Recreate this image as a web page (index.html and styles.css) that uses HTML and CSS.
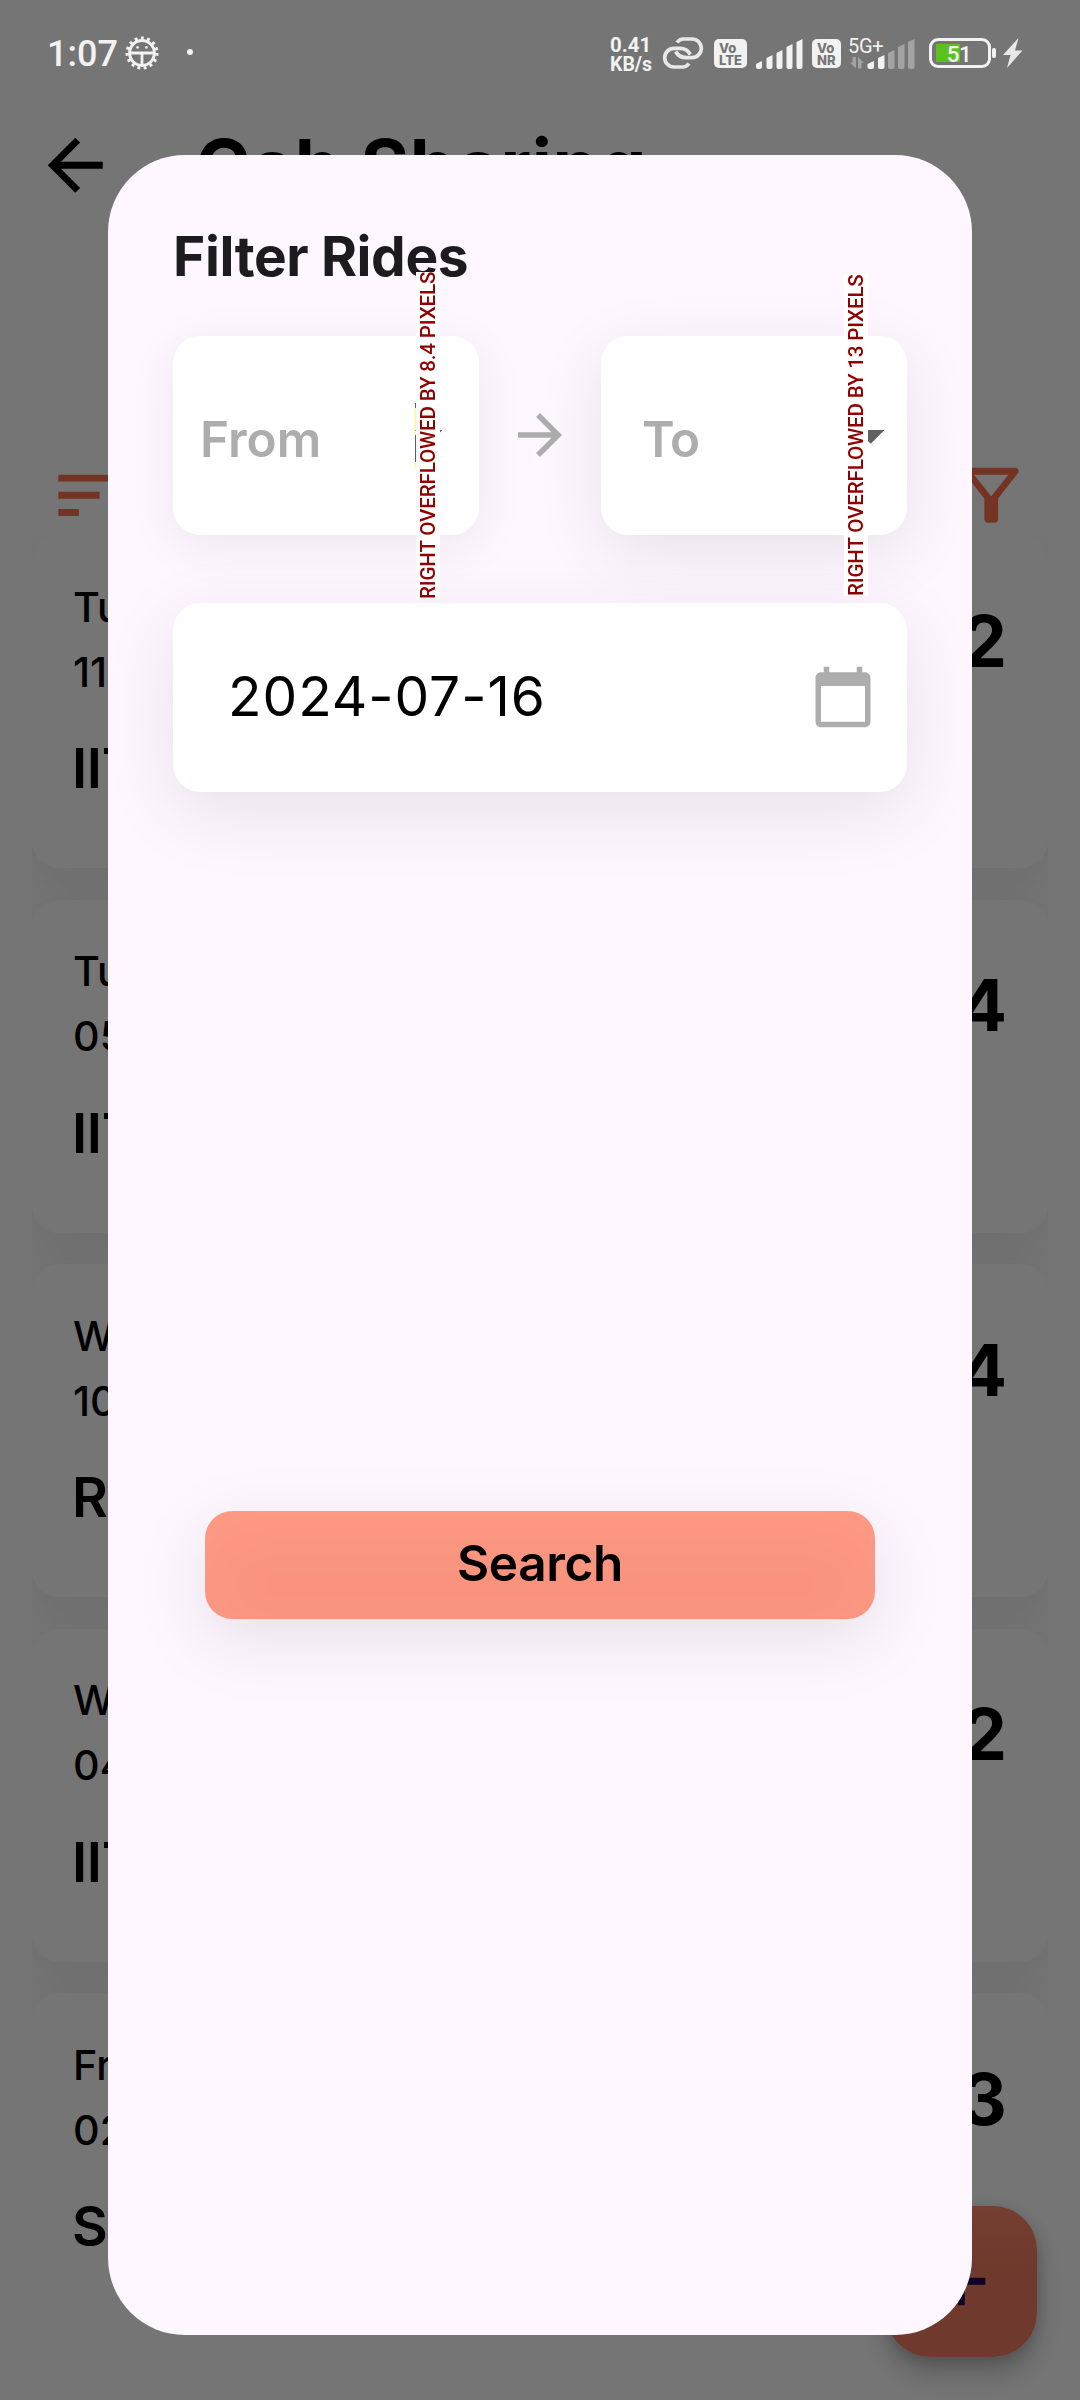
FILE: index.html
```html
<!DOCTYPE html>
<html lang="en">
<head>
<meta charset="utf-8">
<title>Cab Sharing</title>
<link rel="stylesheet" href="styles.css">
</head>
<body>
<div class="screen">
  <div class="page">
    <header class="appbar">
      <svg class="icon-lg" viewBox="0 0 24 24"><path d="M20 11H7.83l5.59-5.59L12 4l-8 8 8 8 1.41-1.41L7.83 13H20z"/></svg>
      <h1 class="appbar-title">Cab Sharing</h1>
    </header>
    <div class="tools">
      <svg class="icon-lg" viewBox="0 0 24 24"><path d="M3 18h6v-2H3v2zM3 6v2h18V6H3zm0 7h12v-2H3v2z"/></svg>
      <svg class="icon-lg" viewBox="0 0 24 24"><path d="M7 6h10l-5.01 6.3L7 6zm-2.75-.39C6.27 8.2 10 13 10 13v6c0 .55.45 1 1 1h2c.55 0 1-.45 1-1v-6s3.72-4.8 5.74-7.39c.51-.66.04-1.61-.79-1.61H5.04c-.83 0-1.3.95-.79 1.61z"/></svg>
    </div>
    <main class="rides">
      <article class="ride"><div><p class="when">Tu</p><p class="when">11</p><p class="place">IIT</p></div><b class="seats">2</b></article>
      <article class="ride"><div><p class="when">Tu</p><p class="when">05</p><p class="place">IIT</p></div><b class="seats">4</b></article>
      <article class="ride"><div><p class="when">W</p><p class="when">10</p><p class="place">R</p></div><b class="seats">4</b></article>
      <article class="ride"><div><p class="when">W</p><p class="when">04</p><p class="place">IIT</p></div><b class="seats">2</b></article>
      <article class="ride"><div><p class="when">Fr</p><p class="when">02</p><p class="place">S</p></div><b class="seats">3</b></article>
    </main>
    <div class="fab">
      <svg class="icon-lg" viewBox="0 0 24 24"><path d="M19 13h-6v6h-2v-6H5v-2h6V5h2v6h6v2z"/></svg>
    </div>
  </div>

  <div class="scrim"></div>

  <div class="statusbar">
    <span class="clock">1:07</span>
    <svg class="st-gear" width="34" height="34" viewBox="0 0 34 34">
      <circle cx="17" cy="17" r="12.4" fill="none" stroke="#f2f2f2" stroke-width="3"/>
      <circle cx="17" cy="17" r="15" fill="none" stroke="#f2f2f2" stroke-width="3" stroke-dasharray="2.9 3.38"/>
      <path d="M5 15.4h24v3H18.4V30h-2.8V18.4H5z" fill="#f2f2f2"/>
      <circle cx="12.6" cy="11.4" r="1.3" fill="#f2f2f2"/><circle cx="21.4" cy="11.4" r="1.3" fill="#f2f2f2"/>
    </svg>
    <i class="st-dot"></i>
    <span class="speed"><span>0.41</span><span>KB/s</span></span>
    <svg class="st-link" width="42" height="34" viewBox="0 0 42 34" fill="none" stroke="#e8e8e8" stroke-width="3.7">
      <path d="M15 6.500Q17.500 3 21.500 3H30A9.300 9.300 0 0 1 30 21.600H24Q17 21.600 13.700 15.500"/>
      <path d="M27 27.500Q24.500 31 20.500 31H12A9.300 9.300 0 0 1 12 12.400H18Q25 12.400 28.300 18.500"/>
    </svg>
    <span class="badge badge-lte">Vo<br>LTE</span>
    <svg class="st-sig" width="47" height="32" viewBox="0 0 47 32" fill="#f2f2f2">
      <path d="M0 26l6-3v6q0 2-2 2H2q-2 0-2-2zM10.500 20l6-3v12q0 2-2 2h-2q-2 0-2-2zM20.500 15l6-3v17q0 2-2 2h-2q-2 0-2-2zM30.500 9l6-3v23q0 2-2 2h-2q-2 0-2-2zM40.500 4l6-3v28q0 2-2 2h-2q-2 0-2-2z"/>
    </svg>
    <span class="badge badge-nr">Vo<br>NR</span>
    <span class="net">
      <span class="net-label">5G+</span>
      <svg width="68" height="32" viewBox="0 0 68 32">
        <path d="M19.500 26l6.500-3v6q0 2-2 2h-2.500q-2 0-2-2zM30 20l6.500-3v12q0 2-2 2H32q-2 0-2-2z" fill="#f2f2f2"/>
        <path d="M40 15l6.500-3v17q0 2-2 2H42q-2 0-2-2zM50 9l6.500-3v23q0 2-2 2H52q-2 0-2-2zM60 4l6.500-3v28q0 2-2 2H62q-2 0-2-2z" fill="#a3a3a3"/>
        <path d="M4.500 19H8v11.500L2 24.500h2.500zM10 30.500V19l6 6h-2.500v5.500z" fill="#a3a3a3"/>
      </svg>
    </span>
    <span class="battery"><span class="battery-text">51</span></span>
    <svg class="st-bolt" width="20" height="30" viewBox="0 0 20 30"><path d="M15.500 0L0 17h7.500L4 30 19.500 12.500H12z" fill="#e8e8e8"/></svg>
  </div>

  <section class="dialog">
    <h2 class="dialog-title">Filter Rides</h2>
    <div class="route">
      <div class="field field-from">
        <span>From</span>
        <i class="caret"></i>
        <svg class="drop" viewBox="0 0 10 5"><path d="M0 0h10L5 5z"/></svg>
        <span class="overflow">RIGHT OVERFLOWED BY 8.4 PIXELS</span>
      </div>
      <svg class="icon" viewBox="0 0 24 24"><path d="M12 4l-1.410 1.410L16.170 11H4v2h12.170l-5.580 5.590L12 20l8-8z"/></svg>
      <div class="field field-to">
        <span>To</span>
        <svg class="drop" viewBox="0 0 10 5"><path d="M0 0h10L5 5z"/></svg>
        <span class="overflow">RIGHT OVERFLOWED BY 13 PIXELS</span>
      </div>
    </div>
    <div class="date">
      <span>2024-07-16</span>
      <svg class="icon" viewBox="0 0 24 24"><path d="M20 3h-1V1h-2v2H7V1H5v2H4c-1.100 0-2 .9-2 2v16c0 1.100.9 2 2 2h16c1.100 0 2-.9 2-2V5c0-1.100-.9-2-2-2zm0 18H4V8h16v13z"/></svg>
    </div>
    <div class="search">Search</div>
  </section>
</div>
</body>
</html>
```
FILE: styles.css
```css
* { box-sizing: border-box; margin: 0; padding: 0; }
body { width: 1080px; height: 2400px; overflow: hidden; background: #fff; font-family: Inter, sans-serif; color: #000; }
svg { display: block; flex: none; }
.screen { position: relative; width: 1080px; height: 2400px; overflow: hidden; }
.page { height: 2400px; display: flex; flex-direction: column; }
.icon-lg { width: 82.5px; height: 82.5px; }
.icon { width: 66px; height: 66px; fill: #adadad; }

/* Ride list behind the dialog */
.appbar { display: flex; padding: 124px 0 0 34px; height: 454px; }
.appbar-title { margin: -3px 0 0 79px; font-size: 74.25px; line-height: 90px; font-weight: 700; letter-spacing: .65px; white-space: nowrap; }
.tools { display: flex; justify-content: space-between; height: 81px; padding: 0 48px 0 48px; fill: #ff7050; }
.rides { display: flex; flex-direction: column; gap: 31.5px; height: 1727px; margin: 0 32px; overflow: hidden; }
.ride { flex: none; display: flex; justify-content: space-between; height: 333px; padding: 39.5px 41px 0 41px; border-radius: 27.5px; background: #fff; box-shadow: 0 20px 60px rgba(0,0,0,.08); }
.when { font-size: 41.25px; line-height: 65px; font-weight: 500; }
.place { margin-top: 30.5px; font-size: 55px; line-height: 66px; font-weight: 600; letter-spacing: -.4px; text-indent: -1px; }
.seats { margin-top: 24px; font-size: 71.5px; line-height: 84px; font-weight: 700; }
.fab { position: absolute; left: 886px; top: 2205.500px; width: 151px; height: 151px; border-radius: 44px; display: flex; align-items: center; justify-content: center; background: linear-gradient(#fd8a6c, #f27e62 40%); box-shadow: 0 16px 28px rgba(0,0,0,.22), 0 3px 14px rgba(0,0,0,.16); fill: #21005d; }
.scrim { position: absolute; inset: 0; background: rgba(0,0,0,.54); }

/* Status bar */
.statusbar { position: absolute; left: 0; top: 0; width: 1080px; height: 104px; padding: 0 57px 0 47px; display: flex; align-items: flex-start; color: #f2f2f2; font-family: Roboto, sans-serif; }
.clock { width: 78px; margin-top: 33px; font-size: 36px; line-height: 43px; font-weight: 500; white-space: nowrap; }
.st-gear { margin-top: 36px; }
.st-dot { width: 6px; height: 6px; margin: 49px 0 0 28px; border-radius: 50%; background: #f2f2f2; }
.speed { display: flex; flex-direction: column; gap: 3px; width: 52px; margin: 38px 0 0 417px; font-size: 19.5px; line-height: 16px; font-weight: 700; white-space: nowrap; }
.speed span:first-child { font-size: 20.5px; line-height: 15px; }
.speed span:last-child { line-height: 18px; }
.st-link { margin-top: 36px; }
.badge { height: 29px; margin-top: 39px; padding-top: 3px; border-radius: 5px; background: #f2f2f2; color: #757575; font: 800 13px/12px Inter, sans-serif; text-align: left; white-space: nowrap; }
.badge-lte { width: 33px; margin-left: 10px; padding-left: 5px; }
.st-sig { margin: 37.500px 0 0 9px; }
.badge-nr { width: 29px; margin-left: 9px; padding-left: 5px; }
.net { position: relative; margin: 37.500px 0 0 7px; }
.net-label { position: absolute; left: 0; top: -3px; font-size: 20px; line-height: 22px; letter-spacing: -.3px; }
.battery { position: relative; width: 62px; height: 30px; margin: 38px 12px 0 13px; border: 3px solid #f2f2f2; border-radius: 9px; display: flex; justify-content: center; align-items: center; background: linear-gradient(#5bc11e, #5bc11e) 4px 3px / 24px 18px no-repeat; }
.battery::after { content: ""; position: absolute; right: -8px; top: 7px; width: 4px; height: 10px; border-radius: 2px; background: #f2f2f2; }
.battery-text { margin: 2px 2px 0 0; font-size: 22.5px; line-height: 24px; font-weight: 500; letter-spacing: -.5px; }
.st-bolt { margin-top: 38px; }

/* Filter dialog */
.dialog { position: absolute; left: 108px; top: 155px; width: 864px; height: 2180px; padding: 68px 65px 0; border-radius: 77px; background: #fef7ff; isolation: isolate; }
.dialog-title { font-size: 55px; line-height: 66px; font-weight: 700; letter-spacing: -.4px; color: #1d1b20; white-space: nowrap; }
.route { display: flex; justify-content: space-between; align-items: center; margin-top: 47px; }
.route .icon { position: relative; left: -.5px; top: -.5px; }
.field { position: relative; width: 306px; height: 199px; padding-top: 7px; display: flex; align-items: center; border-radius: 27.5px; background: #fff; font-size: 49.5px; font-weight: 600; color: #adadad; }
.field-from { padding-left: 27px; box-shadow: 0 11px 50px rgba(0,0,0,.07); }
.field-to { padding-left: 41px; box-shadow: 0 18px 70px rgba(0,0,0,.09); }
.field-to > span:first-child { letter-spacing: -.8px; }
.drop { position: absolute; top: 94px; width: 27.5px; height: 13.75px; fill: #616161; }
.field-from .drop { left: 241.500px; }
.field-to .drop { left: 255.500px; }
.caret { position: absolute; left: 242px; top: 67px; width: 1px; height: 65px; background: linear-gradient(#616161 5px, #ffff66 5px 32px, #616161 32px 59px, #ffff66 59px); }
.overflow { position: absolute; writing-mode: vertical-rl; transform: rotate(180deg); width: 24px; background: #fff; color: #900000; font: 500 20.6px/24px Roboto, sans-serif; letter-spacing: -.17px; white-space: nowrap; }
.field-from .overflow { left: 243px; top: -64px; height: 327px; }
.field-to .overflow { left: 243px; top: -61px; height: 321px; }
.date { display: flex; justify-content: space-between; align-items: center; height: 189px; margin-top: 68px; padding: 0 31.5px 0 55px; border-radius: 27.5px; background: #fff; box-shadow: 0 20px 74px rgba(0,0,0,.095); font-size: 55px; letter-spacing: .95px; }
.date span { margin-top: -3px; }
.date .icon { margin-top: -1px; }
.search { position: relative; display: flex; justify-content: center; align-items: center; height: 108px; margin: 719px 32px 0; padding-bottom: 4px; border-radius: 27.5px; background: rgba(255,114,80,.7); font-size: 49.5px; font-weight: 600; letter-spacing: -.35px; }
.search::before { content: ""; position: absolute; z-index: -1; inset: 20px 0 -20px; border-radius: 27.5px; background: rgba(0,0,0,.09); filter: blur(33px); }
```
